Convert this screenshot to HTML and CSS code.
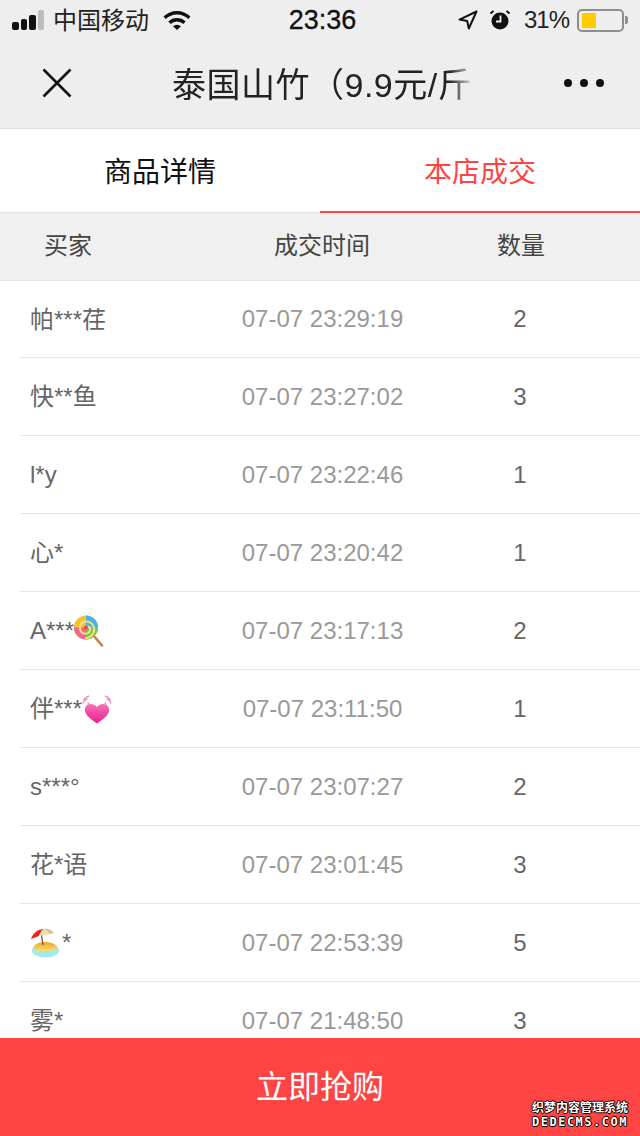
FILE: index.html
```html
<!DOCTYPE html>
<html lang="zh-CN">
<head>
    <meta charset="UTF-8">
    <meta name="viewport" content="width=device-width, initial-scale=1.0">
    <title>泰国山竹</title>
    <link rel="stylesheet" href="styles.css">
</head>
<body>
    <div class="page">
        <div class="top-bar">
            <div class="status-bar">
                <div class="status-left">
                    <div class="signal"><i></i><i></i><i></i><i class="off"></i></div>
                    <span class="carrier">中国移动</span>
                    <svg class="wifi" width="28" height="20" viewBox="0 0 28 20">
                        <path d="M0.500 6.500a19.500 19.500 0 0 1 27 0l-2.300 2.500a16 16 0 0 0-22.400 0z" fill="#111"/>
                        <path d="M5.300 11.400a12.600 12.600 0 0 1 17.400 0L20.300 14a9 9 0 0 0-12.600 0z" fill="#111"/>
                        <path d="M10 16.200a6 6 0 0 1 8 0L14 20z" fill="#111"/>
                    </svg>
                </div>
                <div class="clock">23:36</div>
                <div class="status-right">
                    <svg class="location" width="20" height="20" viewBox="0 0 20 20">
                        <path d="M18.500 1.500 1.500 9.600l7.700 1.300 1.600 7.600z" fill="none" stroke="#111" stroke-width="2" stroke-linejoin="round"/>
                    </svg>
                    <svg class="alarm" width="20" height="20" viewBox="0 0 20 20">
                        <circle cx="10" cy="11" r="8.500" fill="#111"/>
                        <path d="M10.500 5.500v6H6" fill="none" stroke="#eee" stroke-width="1.800"/>
                        <path d="M0.500 3.500 3.500 1M19.500 3.500 16.500 1" stroke="#111" stroke-width="2"/>
                    </svg>
                    <span class="percent">31%</span>
                    <div class="battery"><div class="battery-level"></div></div>
                    <div class="battery-tip"></div>
                </div>
            </div>
            <div class="nav-bar">
                <svg class="close" width="30" height="30" viewBox="0 0 30 30">
                    <path d="M1.500 1.500 28.500 28.500M28.500 1.500 1.500 28.500" stroke="#111" stroke-width="2.600"/>
                </svg>
                <div class="nav-title">泰国山竹（9.9元/斤</div>
                <div class="more"><i></i><i></i><i></i></div>
            </div>
        </div>

        <div class="tabs">
            <div class="tab">商品详情</div>
            <div class="tab active">本店成交</div>
        </div>

        <div class="table-head">
            <div class="head-buyer">买家</div>
            <div class="head-time">成交时间</div>
            <div class="head-qty">数量</div>
        </div>

        <div class="rows">
            <div class="row"><div class="buyer cjk">帕***荏</div><div class="time">07-07 23:29:19</div><div class="qty">2</div></div>
            <div class="row"><div class="buyer cjk">快**鱼</div><div class="time">07-07 23:27:02</div><div class="qty">3</div></div>
            <div class="row"><div class="buyer">l*y</div><div class="time">07-07 23:22:46</div><div class="qty">1</div></div>
            <div class="row"><div class="buyer cjk">心*</div><div class="time">07-07 23:20:42</div><div class="qty">1</div></div>
            <div class="row">
                <div class="buyer">A***<svg class="emoji" width="30" height="32" viewBox="0 0 30 32">
                    <path d="M19 20 28 30.500" stroke="#c8814a" stroke-width="2.600" stroke-linecap="round"/>
                    <circle cx="12" cy="12.500" r="12" fill="#f2c230"/>
                    <path d="M12 .5a12 12 0 0 1 12 12H12z" fill="#49b3e8"/>
                    <path d="M24 12.500a12 12 0 0 1-12 12v-12z" fill="#7cc44a"/>
                    <path d="M12 24.500a12 12 0 0 1-12-12h12z" fill="#ef6a8e"/>
                    <path d="M12 12.500c2-2 5 0 4 3-1 4-7 4-9 1-3-4 0-10 5-10 7 0 10 7 7 12-2 3-5 5-8 4.500" fill="none" stroke="#f3dc8c" stroke-width="2"/>
                    <circle cx="12" cy="12.500" r="2" fill="#e8463c"/>
                </svg></div>
                <div class="time">07-07 23:17:13</div><div class="qty">2</div>
            </div>
            <div class="row">
                <div class="buyer cjk emoji-after">伴***<svg class="emoji" width="30" height="30" viewBox="0 0 30 30">
                    <defs>
                        <linearGradient id="heart" x1="0" y1="0" x2="0" y2="1">
                            <stop offset="0" stop-color="#fb6fb8"/>
                            <stop offset="1" stop-color="#e81f8e"/>
                        </linearGradient>
                    </defs>
                    <path d="M15 29.500C7 24 2 20 3 14.500c1-5 8-6.500 12-1.500 4-5 11-3.500 12 1.500 1 5.500-4 9.500-12 15z" fill="url(#heart)"/>
                    <path d="M1 9.500C1.500 7 3 5.500 5.500 5M1.500 6C3 3.500 4.500 2.500 7 2M5.500 10.500c.5-1 1-1.500 2-2M29 9.500C28.500 7 27 5.500 24.500 5M28.500 6C27 3.500 25.500 2.500 23 2M24.500 10.500c-.5-1-1-1.500-2-2" fill="none" stroke="#f486c6" stroke-width="1.300"/>
                </svg></div>
                <div class="time">07-07 23:11:50</div><div class="qty">1</div>
            </div>
            <div class="row"><div class="buyer">s***°</div><div class="time">07-07 23:07:27</div><div class="qty">2</div></div>
            <div class="row"><div class="buyer cjk">花*语</div><div class="time">07-07 23:01:45</div><div class="qty">3</div></div>
            <div class="row">
                <div class="buyer"><svg class="emoji" width="32" height="30" viewBox="0 0 32 30">
                    <defs>
                        <linearGradient id="sand" x1="0" y1="0" x2="0" y2="1">
                            <stop offset="0" stop-color="#f0a030"/>
                            <stop offset="1" stop-color="#fbe06a"/>
                        </linearGradient>
                    </defs>
                    <ellipse cx="15.500" cy="22.500" rx="13.500" ry="7" fill="#a6e8ea"/>
                    <path d="M3 20c1-4 7-6 12-6s12 2 12 6c-2 4-22 4-24 0z" fill="url(#sand)"/>
                    <path d="M11 4 13 17" stroke="#8a5a2c" stroke-width="1.400"/>
                    <path d="M1 11C3 5 8 1 14 1c-3 2-4 4-5 7z" fill="#e8271f"/>
                    <path d="M9 8c1-3 2-5 5-7 3 1 4 2 5 5z" fill="#f4dca8"/>
                    <path d="M14 1c4-1 8 1 10 4l-5 1c-1-3-2-4-5-5z" fill="#d9c08a"/>
                </svg>*</div>
                <div class="time">07-07 22:53:39</div><div class="qty">5</div>
            </div>
            <div class="row"><div class="buyer cjk">雾*</div><div class="time">07-07 21:48:50</div><div class="qty">3</div></div>
        </div>

        <div class="buy-button">立即抢购</div>
        <div class="watermark">
            <div class="wm-cn">织梦内容管理系统</div>
            <div class="wm-en">DEDECMS.COM</div>
        </div>
    </div>
</body>
</html>
```

FILE: styles.css
```css
* {
    box-sizing: border-box;
}
body {
    margin: 0;
    font-family: "Liberation Sans", "Noto Sans CJK SC", sans-serif;
    background: #fff;
}
.page {
    position: relative;
    width: 640px;
    height: 1136px;
    overflow: hidden;
}
.top-bar {
    height: 129px;
    background: #eeeeee;
    border-bottom: 1px solid #dddddd;
}
.status-bar {
    height: 42px;
    display: flex;
    align-items: center;
    justify-content: space-between;
    padding: 0 12px 2px 12px;
    color: #111;
}
.status-left,
.status-right {
    width: 232px;
    display: flex;
    align-items: center;
}
.status-right {
    justify-content: flex-end;
}
.signal {
    display: flex;
    align-items: flex-end;
    gap: 2px;
    height: 20px;
}
.signal i {
    width: 6.500px;
    background: #111;
    border-radius: 2px;
}
.signal i:nth-child(1) { height: 8px; }
.signal i:nth-child(2) { height: 11px; }
.signal i:nth-child(3) { height: 15px; }
.signal i:nth-child(4) { height: 20px; }
.signal i.off {
    background: #bdbdbd;
}
.carrier {
    margin-left: 9px;
    margin-top: -4px;
    font-size: 24px;
    color: #222;
}
.wifi {
    margin-left: 14px;
}
.clock {
    margin-left: 5px;
    font-size: 27px;
    font-weight: 500;
    -webkit-text-stroke: 0.3px #111;
}
.location {
    margin-right: 12px;
}
.alarm {
    margin-right: 14px;
}
.percent {
    font-size: 24px;
    letter-spacing: -1px;
    color: #222;
    margin-right: 8px;
}
.battery {
    width: 47px;
    height: 23px;
    border: 2px solid #8e8e8e;
    border-radius: 5px;
    padding: 2px 3px;
}
.battery-level {
    width: 14px;
    height: 100%;
    background: #ffcc00;
}
.battery-tip {
    width: 3px;
    height: 8px;
    margin-left: 1px;
    background: #8e8e8e;
    border-radius: 0 2px 2px 0;
}
.nav-bar {
    height: 86px;
    display: flex;
    align-items: center;
    padding-bottom: 4px;
}
.close {
    margin-left: 42px;
    flex-shrink: 0;
}
.nav-title {
    width: 302px;
    margin-left: 100px;
    margin-top: -2px;
    font-size: 34px;
    letter-spacing: 0.500px;
    color: #222;
    white-space: nowrap;
    -webkit-mask-image: linear-gradient(to right, #000 92%, transparent 100%);
    mask-image: linear-gradient(to right, #000 92%, transparent 100%);
}
.more {
    margin-left: 90px;
    display: flex;
    gap: 8px;
}
.more i {
    width: 8px;
    height: 8px;
    border-radius: 50%;
    background: #111;
}
.tabs {
    display: flex;
    height: 84px;
    border-bottom: 1px solid #e2e2e2;
}
.tab {
    width: 320px;
    padding-top: 2px;
    text-align: center;
    font-size: 28px;
    line-height: 84px;
    color: #111;
}
.tab.active {
    color: #ff4444;
    border-bottom: 2px solid #ff4444;
    height: 84px;
}
.table-head {
    height: 68px;
    display: grid;
    grid-template-columns: 136px 372px 1fr;
    align-items: center;
    padding-bottom: 7px;
    background: #f0f0f0;
    border-bottom: 1px solid #e4e4e4;
    font-size: 24px;
    color: #444;
    text-align: center;
}
.head-qty {
    margin-left: -53px;
    margin-right: 53px;
}
.rows {
    padding-left: 20px;
}
.row {
    height: 78px;
    display: grid;
    grid-template-columns: 198px 209px 186px;
    align-items: center;
    border-bottom: 1px solid #e6e6e6;
    font-size: 24px;
}
.row:first-child {
    height: 77px;
}
.buyer {
    display: flex;
    align-items: center;
    padding-left: 10px;
    color: #666;
}
.buyer.cjk {
    margin-top: -4px;
}
.emoji-after .emoji {
    margin-top: 4px;
}
.time {
    text-align: center;
    color: #999;
}
.qty {
    text-align: center;
    color: #666;
}
.emoji {
    flex-shrink: 0;
}
.buy-button {
    position: absolute;
    left: 0;
    right: 0;
    bottom: 0;
    height: 98px;
    background: #ff4444;
    color: #fff;
    font-size: 32px;
    line-height: 98px;
    text-align: center;
}
.watermark {
    position: absolute;
    right: 12px;
    bottom: 8px;
    color: #fff;
    font-weight: bold;
    text-align: center;
    text-shadow: 1px 0 0 #000, -1px 0 0 #000, 0 1px 0 #000, 0 -1px 0 #000;
}
.wm-cn {
    font-size: 12px;
    line-height: 15px;
}
.wm-en {
    font-family: "DejaVu Sans Mono", monospace;
    font-size: 12px;
    line-height: 12px;
    letter-spacing: 1.500px;
}
```
